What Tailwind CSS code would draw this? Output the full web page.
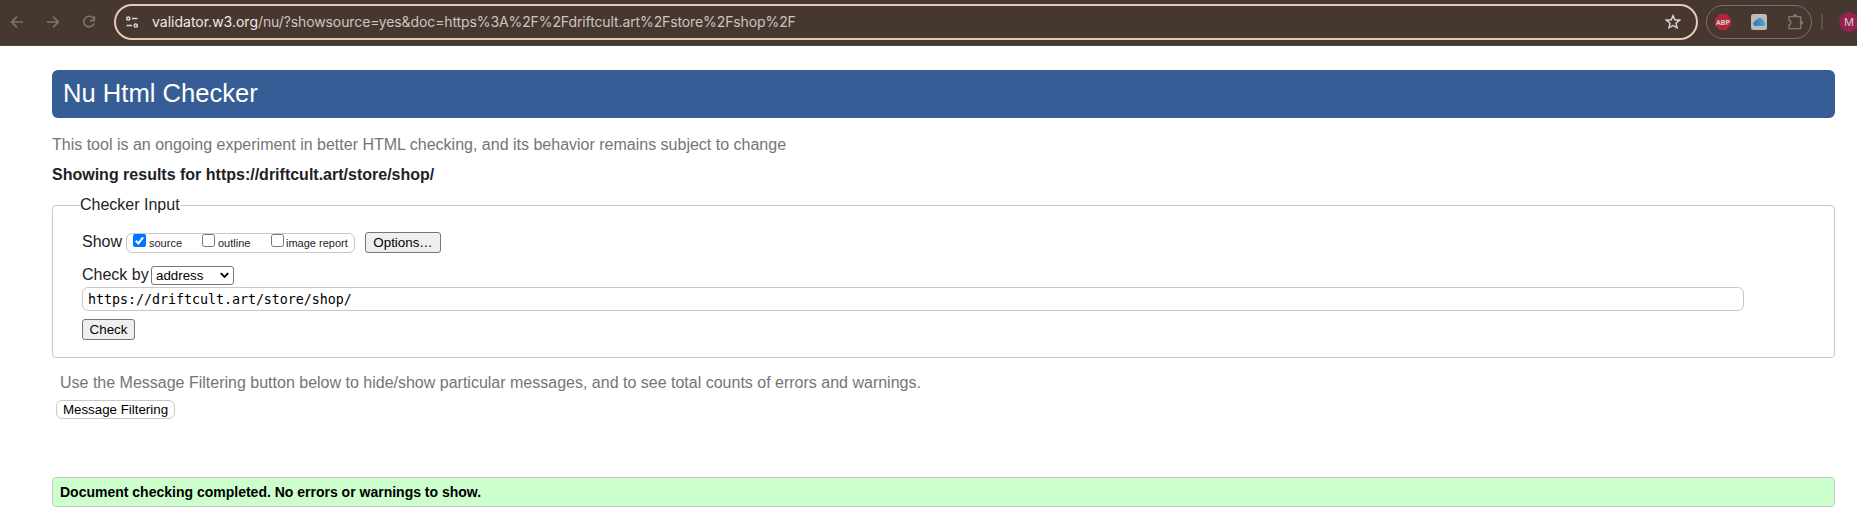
<!DOCTYPE html>
<html lang="en">
<head>
<meta charset="utf-8">
<title>Nu Html Checker</title>
<script src="https://cdn.jsdelivr.net/npm/@tailwindcss/browser@4"></script>
</head>
<body class="h-[519px] overflow-hidden bg-white font-['Liberation_Sans',sans-serif] text-base text-[#1f2126]">
<header class="flex h-[46px] items-start overflow-hidden border-b border-[#50463f] bg-[#463831] font-[Inter,sans-serif]">
  <nav class="flex h-[44px] w-[114px] shrink-0 items-center text-[#80736b]">
    <svg class="ml-[9px] size-4" viewBox="0 0 16 16" fill="none" stroke="currentColor" stroke-width="1.6"><path d="M14 8H2.8M8 2.6 2.6 8 8 13.4"/></svg>
    <svg class="ml-5 size-4" viewBox="0 0 16 16" fill="none" stroke="currentColor" stroke-width="1.6"><path d="M2 8h11.2M8 2.6 13.4 8 8 13.4"/></svg>
    <svg class="ml-5 size-4" viewBox="0 0 16 16" fill="none" stroke="currentColor" stroke-width="1.6"><path d="M12.7 4.9A5.3 5.3 0 1 0 13.1 9.4M13.3 2v4.6H8.7"/></svg>
  </nav>
  <div class="mt-1 flex h-9 w-[1584px] shrink-0 items-center rounded-full border-2 border-[#e8c9b8] pl-2.5 pr-[15px]">
    <svg class="size-3" viewBox="0 0 12 12" fill="none" stroke="#ded5d0" stroke-width="1.5"><circle cx="2.3" cy="2.5" r="1.6"/><path d="M6 2.5h5.5M0.5 9.5H6"/><circle cx="9.7" cy="9.5" r="1.6"/></svg>
    <div class="-mt-px ml-3.5 whitespace-nowrap text-[14px] tracking-[-0.11px] text-[#cfc4be]"><span class="tracking-normal text-[#f1e9e5]">validator.w3.org</span>/nu/?showsource=yes&amp;doc=https%3A%2F%2Fdriftcult.art%2Fstore%2Fshop%2F</div>
    <svg class="ml-auto size-4" viewBox="0 0 16 16" fill="none" stroke="#e0d7d2" stroke-width="1.4"><path d="m8 1.6 1.75 4.2 4.8.4-3.6 3.1 1.1 4.6L8 11.5l-4.05 2.4 1.1-4.6-3.6-3.1 4.8-.4z"/></svg>
  </div>
  <div class="ml-2 mt-[5px] flex h-[34px] w-[106px] shrink-0 items-center rounded-full border border-[#7a6f69] pl-2">
    <svg class="size-4" viewBox="0 0 16 16"><path fill="#b3273b" d="M4.7 0h6.6L16 4.7v6.6L11.3 16H4.7L0 11.3V4.7z"/><text x="8" y="10.9" text-anchor="middle" font-family="Roboto" font-size="8" font-weight="700" textLength="14" lengthAdjust="spacingAndGlyphs" fill="#dccbc8">ABP</text></svg>
    <svg class="ml-5 size-4" viewBox="0 0 16 16"><defs><linearGradient id="cloud" x1="0" x2="1"><stop stop-color="#2775b5"/><stop offset="1" stop-color="#5ca8d8"/></linearGradient></defs><rect width="16" height="16" rx="2.5" fill="#c0bab7"/><path fill="url(#cloud)" d="M4.3 12a2.4 2.4 0 0 1-.2-4.7 2.1 2.1 0 0 1 2.2-1.8 3.5 3.5 0 0 1 6.3 2.1A2.2 2.2 0 0 1 12 12z"/></svg>
    <svg class="ml-5 size-[17px] -translate-y-px" viewBox="0 0 17 17" fill="none" stroke="#83776f" stroke-width="1.4"><path d="M2 3.6h11.6v12H2v-3.7c1.3-.2 2-1 2-2.3S3.300 7.500 2 7.300z"/><path fill="#83776f" stroke="none" d="M6 3a2 2 0 0 1 4 0zM14.200 7.600a2 2 0 0 1 0 4z"/></svg>
  </div>
  <div class="ml-[9px] mt-3.5 h-4 w-0.5 shrink-0 bg-[#5f5048]"></div>
  <div class="ml-4 mt-3 flex size-5 shrink-0 items-center justify-center rounded-full bg-[#93234f] text-[11px] text-[#d8c5cb]">M</div>
</header>
<main class="flex flex-col pl-[52px] pr-[22px] pt-6">
  <h1 class="h-12 rounded-md bg-[#365d95] pl-[11px] text-[25.6px] leading-[46px] text-white">Nu Html Checker</h1>
  <p class="mt-[15px] h-6 leading-6 text-[#757575]">This tool is an ongoing experiment in better HTML checking, and its behavior remains subject to change</p>
  <h2 class="mt-1.5 h-6 font-bold leading-6">Showing results for https://driftcult.art/store/shop/</h2>
  <section class="mt-[18px] h-[153px] rounded border border-[#c8c8c8] pl-[29px]">
    <div class="-ml-0.5 -mt-[13px] h-6 w-fit bg-white leading-6">Checker Input</div>
    <div class="mt-[15px] flex h-[21px] items-start">
      <span class="w-11 leading-[19px]">Show</span>
      <div class="mt-px flex h-5 w-[229px] items-start rounded-md border border-[#c8c8c8] pl-1.5 text-[11px] leading-[18px]">
        <svg class="size-[13px] shrink-0" viewBox="0 0 13 13"><rect width="13" height="13" rx="2" fill="#0075ff"/><path d="m2.8 6.8 2.5 2.6 4.8-6" fill="none" stroke="#fff" stroke-width="2"/></svg>
        <span class="ml-[3px] w-[53px]">source</span>
        <span class="size-[13px] shrink-0 rounded-[2.5px] border border-[#767676]"></span>
        <span class="ml-[3px] w-[53px]">outline</span>
        <span class="size-[13px] shrink-0 rounded-[2.5px] border border-[#767676]"></span>
        <span class="ml-0.5 whitespace-nowrap">image report</span>
      </div>
      <button class="ml-2.5 h-[21px] w-[76px] rounded-[3px] border border-[#767676] bg-[#efefef] text-[13.333px] leading-[19px] text-black">Options…</button>
    </div>
    <div class="mt-[13px] flex h-[19px]">
      <span class="w-[69px] leading-[18px]">Check by</span>
      <div class="flex h-[19px] w-[83px] items-center justify-between rounded-[3px] border border-[#767676] pl-1 pr-1 text-[13.333px] leading-[17px] text-black">address
        <svg class="h-[7px] w-[9px]" viewBox="0 0 9 7" fill="none" stroke="#000" stroke-width="1.9"><path d="m.8 1.2 3.7 3.7 3.7-3.7"/></svg>
      </div>
    </div>
    <div class="mt-0.5 h-6 w-[1662px] rounded-md border border-[#c8c8c8] pl-[5px] font-['DejaVu_Sans_Mono',monospace] text-[13.333px] leading-[23px] tracking-[-0.03px] text-black">https://driftcult.art/store/shop/</div>
    <button class="mt-2 block h-[21px] w-[53px] rounded-[3px] border border-[#767676] bg-[#efefef] text-[13.333px] leading-[19px] text-black">Check</button>
  </section>
  <p class="mt-[13px] h-6 pl-2 leading-6 text-[#757575]">Use the Message Filtering button below to hide/show particular messages, and to see total counts of errors and warnings.</p>
  <button class="ml-1 mt-[5px] h-[19px] w-[119px] rounded-md border border-[#c8c8c8] bg-white text-[13.333px] leading-[17px] text-black">Message Filtering</button>
  <div class="mt-[58px] h-[30px] rounded border border-[#c8c8c8] bg-[#ccffcc] pl-[7px] text-[14px] font-bold leading-7 text-black">Document checking completed. No errors or warnings to show.</div>
</main>
</body>
</html>
